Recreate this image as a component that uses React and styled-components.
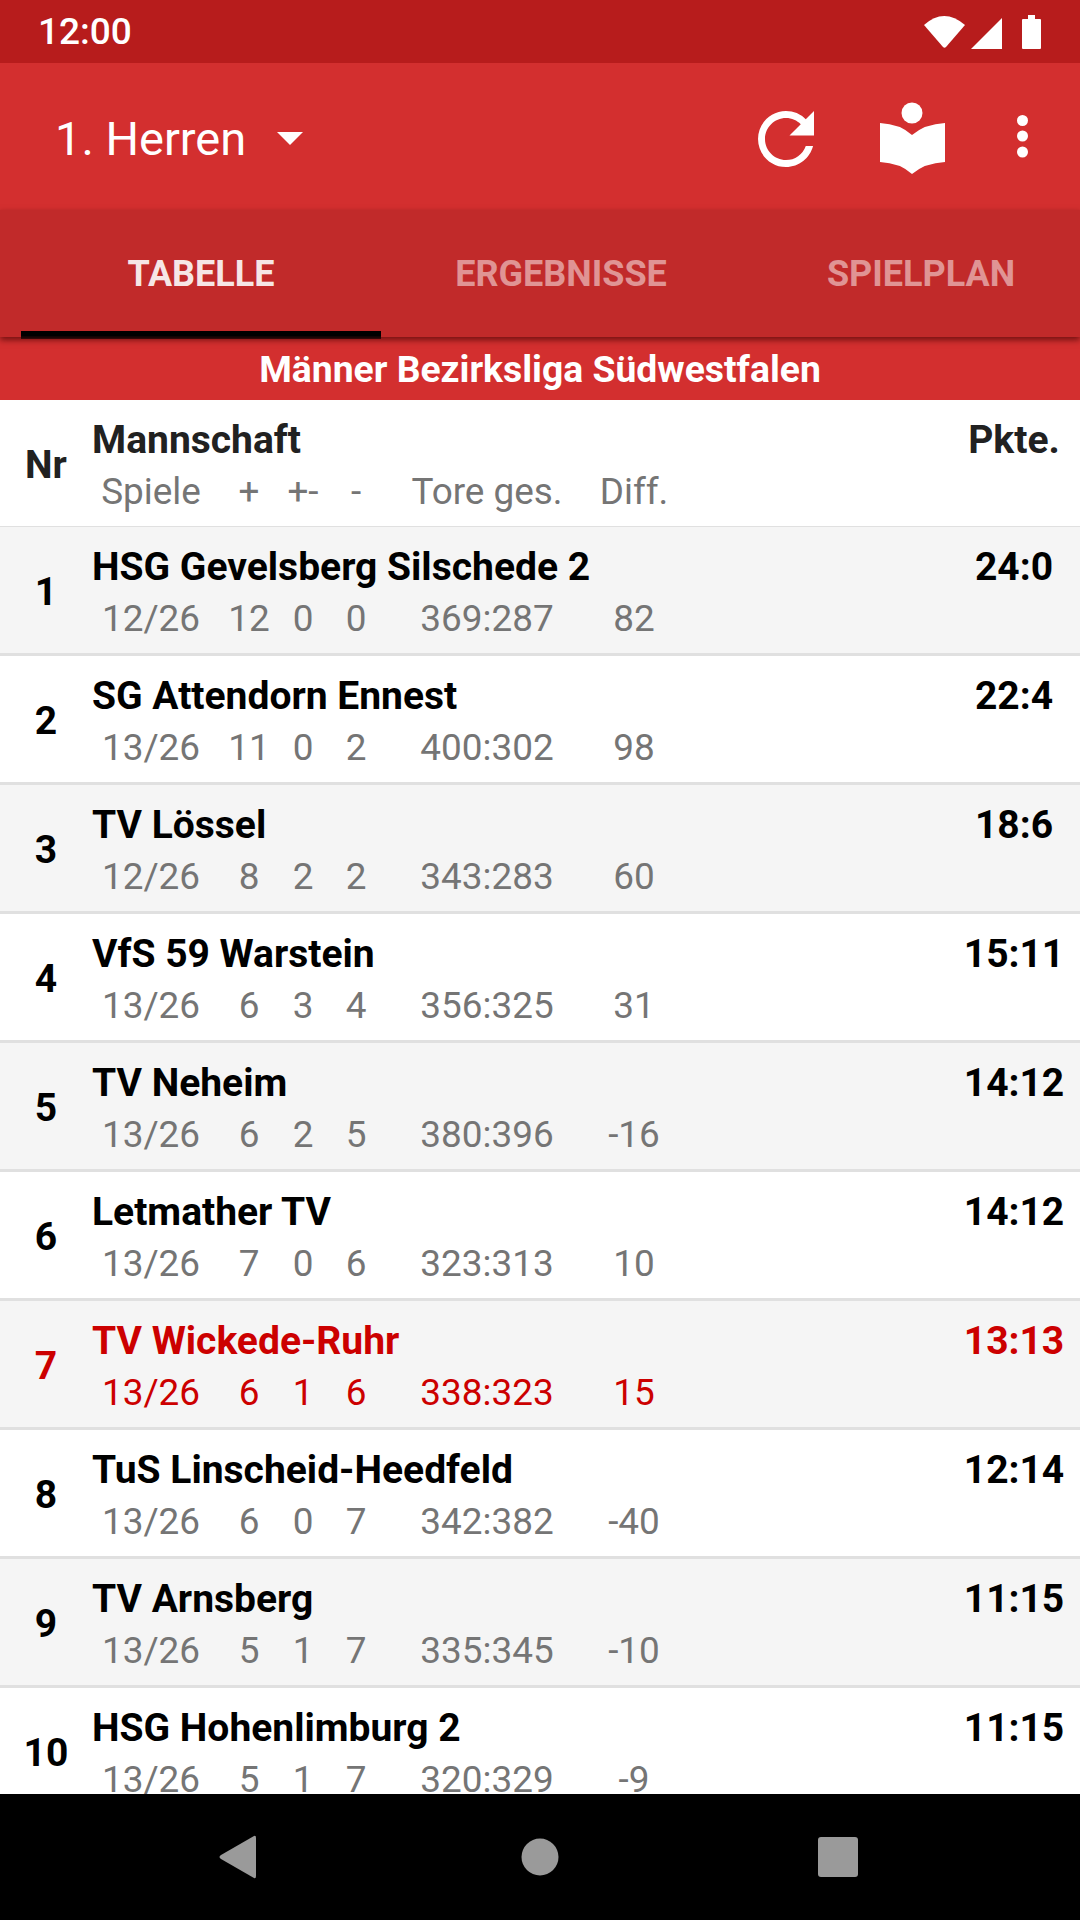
import React from 'react'
import styled, { createGlobalStyle } from 'styled-components'

const GlobalStyle = createGlobalStyle`
  html, body {
    margin: 0;
    padding: 0;
    background: #fff;
    font-family: Roboto, "Noto Sans", sans-serif;
  }
`

const teams = [
  { nr: 1, name: 'HSG Gevelsberg Silschede 2', pts: '24:0', played: '12/26', won: 12, drawn: 0, lost: 0, goals: '369:287', diff: 82 },
  { nr: 2, name: 'SG Attendorn Ennest', pts: '22:4', played: '13/26', won: 11, drawn: 0, lost: 2, goals: '400:302', diff: 98 },
  { nr: 3, name: 'TV Lössel', pts: '18:6', played: '12/26', won: 8, drawn: 2, lost: 2, goals: '343:283', diff: 60 },
  { nr: 4, name: 'VfS 59 Warstein', pts: '15:11', played: '13/26', won: 6, drawn: 3, lost: 4, goals: '356:325', diff: 31 },
  { nr: 5, name: 'TV Neheim', pts: '14:12', played: '13/26', won: 6, drawn: 2, lost: 5, goals: '380:396', diff: -16 },
  { nr: 6, name: 'Letmather TV', pts: '14:12', played: '13/26', won: 7, drawn: 0, lost: 6, goals: '323:313', diff: 10 },
  { nr: 7, name: 'TV Wickede-Ruhr', pts: '13:13', played: '13/26', won: 6, drawn: 1, lost: 6, goals: '338:323', diff: 15, own: true },
  { nr: 8, name: 'TuS Linscheid-Heedfeld', pts: '12:14', played: '13/26', won: 6, drawn: 0, lost: 7, goals: '342:382', diff: -40 },
  { nr: 9, name: 'TV Arnsberg', pts: '11:15', played: '13/26', won: 5, drawn: 1, lost: 7, goals: '335:345', diff: -10 },
  { nr: 10, name: 'HSG Hohenlimburg 2', pts: '11:15', played: '13/26', won: 5, drawn: 1, lost: 7, goals: '320:329', diff: -9 },
]

const Screen = styled.div`
  width: 1080px;
  height: 1920px;
  display: flex;
  flex-direction: column;
  overflow: hidden;
`

const StatusBar = styled.div`
  height: 63px;
  flex: none;
  background: #b71c1c;
  color: #fff;
  display: flex;
  align-items: center;
  justify-content: space-between;
  padding: 0 38px;
  font-size: 37px;
  font-weight: 500;
`

const StatusIcons = styled.svg`
  display: block;
`

const Toolbar = styled.div`
  height: 147px;
  box-sizing: border-box;
  flex: none;
  background: #d32f2f;
  color: #fff;
  display: flex;
  align-items: center;
  padding: 4px 0 0 55px;
`

const Title = styled.div`
  font-size: 47px;
  line-height: 54px;
`

const Caret = styled.div`
  width: 0;
  height: 0;
  margin-left: 31px;
  border-left: 13px solid transparent;
  border-right: 13px solid transparent;
  border-top: 13px solid #fff;
`

const Actions = styled.div`
  margin-left: auto;
  display: flex;
  align-items: center;
  padding-right: 52px;
`

const RefreshIcon = styled.svg`
  margin-right: 52px;
`

const BookIcon = styled.svg`
  margin: -2px 72px 0 0;
`

const TabBar = styled.div`
  height: 127px;
  flex: none;
  background: #c12a2a;
  display: flex;
  padding-left: 21px;
  position: relative;
  z-index: 2;
  box-shadow: 0 3px 6px rgba(90, 10, 10, 0.8);
`

const Tab = styled.div`
  width: 360px;
  flex: none;
  position: relative;
  display: flex;
  align-items: center;
  justify-content: center;
  font-size: 36px;
  font-weight: 700;
  color: ${p => (p.$active ? '#f6e6e6' : 'rgba(255, 255, 255, 0.5)')};

  &::after {
    content: '';
    display: ${p => (p.$active ? 'block' : 'none')};
    position: absolute;
    left: 0;
    right: 0;
    bottom: -2px;
    height: 8px;
    background: linear-gradient(#000 60%, rgba(0, 0, 0, 0.6));
  }
`

const LeagueBar = styled.div`
  height: 63px;
  flex: none;
  background: #d32f2f;
  color: #fff;
  font-size: 37.3px;
  font-weight: 700;
  display: flex;
  align-items: center;
  justify-content: center;
`

const List = styled.div`
  flex: 1;
  min-height: 0;
  overflow: hidden;
  background: #fff;
`

const Row = styled.div`
  height: ${p => (p.$head ? '127px' : '129px')};
  box-sizing: border-box;
  background: ${p => (p.$shaded ? '#f5f5f5' : '#fff')};
  border-bottom: ${p => (p.$head ? '1px' : '3px')} solid #e0e0e0;
  color: ${p => (p.$own ? '#cc0000' : p.$head ? '#212121' : '#000')};
  display: grid;
  grid-template-columns: 92px 1fr 132px;
`

const Nr = styled.div`
  display: flex;
  align-items: center;
  justify-content: center;
  font-size: 39px;
  font-weight: 700;
  height: 129px;
`

const Main = styled.div`
  padding-top: 15px;
  min-width: 0;
`

const Name = styled.div`
  font-size: 39px;
  font-weight: 700;
  line-height: 50px;
  white-space: nowrap;
`

const Stats = styled.div`
  display: grid;
  grid-template-columns: 118px 78px 30px 76px 186px 108px;
  height: 52px;
  align-items: center;
  font-size: 36.9px;
  color: ${p => (p.$own ? '#cc0000' : '#757575')};
`

const Stat = styled.div`
  justify-self: center;
  white-space: nowrap;
`

const Points = styled.div`
  padding-top: 15px;
  font-size: 39px;
  font-weight: 700;
  line-height: 50px;
  text-align: center;
`

const NavBar = styled.div`
  height: 126px;
  flex: none;
  background: #000;
  display: flex;
  align-items: center;
  padding-left: 218px;
`

const NavSlot = styled.div`
  width: ${p => p.$width}px;
  flex: none;
  display: flex;
`

const Cols = ({ vals, own }) => (
  <Stats $own={own}>
    {vals.map((v, i) => (
      <Stat key={i}>{v}</Stat>
    ))}
  </Stats>
)

export default function App() {
  return (
    <>
      <GlobalStyle />
      <Screen>
        <StatusBar>
          <span>12:00</span>
          <StatusIcons width="122" height="40" viewBox="920 11 122 40">
            <path d="M924 24 Q944 6 965 24 L946 46 Q944.5 47.5 943 46 Z" fill="#fff" />
            <path d="M1002 17 V48 H971 Z" fill="#fff" />
            <path d="M1022 19 Q1022 18 1023 18 H1028 V14 H1035 V18 H1040 Q1041 18 1041 19 V47 Q1041 48 1040 48 H1023 Q1022 48 1022 47 Z" fill="#fff" />
          </StatusIcons>
        </StatusBar>
        <Toolbar>
          <Title>1. Herren</Title>
          <Caret />
          <Actions>
            <RefreshIcon width="84" height="84" viewBox="0 0 24 24" fill="#fff">
              <path d="M17.65 6.35A7.958 7.958 0 0 0 12 4c-4.42 0-7.99 3.58-7.99 8s3.57 8 7.99 8c3.73 0 6.84-2.55 7.73-6h-2.08A5.99 5.99 0 0 1 12 18c-3.31 0-6-2.69-6-6s2.69-6 6-6c1.66 0 3.14.69 4.22 1.78L13 11h7V4l-2.35 2.35z" />
            </RefreshIcon>
            <BookIcon width="65" height="72" viewBox="0 0 65 72" fill="#fff">
              <circle cx="32" cy="11" r="10.5" />
              <path d="M0 21 Q20 22 32 33 Q45 22 65 21 V60 Q45 61 32 72 Q20 61 0 60 Z" />
            </BookIcon>
            <svg width="11" height="48" viewBox="0 0 11 48" fill="#fff">
              <circle cx="5.5" cy="5.5" r="5.5" />
              <circle cx="5.5" cy="21" r="5.5" />
              <circle cx="5.5" cy="37" r="5.5" />
            </svg>
          </Actions>
        </Toolbar>
        <TabBar>
          <Tab $active>TABELLE</Tab>
          <Tab>ERGEBNISSE</Tab>
          <Tab>SPIELPLAN</Tab>
        </TabBar>
        <LeagueBar>Männer Bezirksliga Südwestfalen</LeagueBar>
        <List>
          <Row $head>
            <Nr>Nr</Nr>
            <Main>
              <Name>Mannschaft</Name>
              <Cols vals={['Spiele', '+', '+-', '-', 'Tore ges.', 'Diff.']} />
            </Main>
            <Points>Pkte.</Points>
          </Row>
          {teams.map((t, i) => (
            <Row key={t.nr} $shaded={i % 2 === 0} $own={t.own}>
              <Nr>{t.nr}</Nr>
              <Main>
                <Name>{t.name}</Name>
                <Cols own={t.own} vals={[t.played, t.won, t.drawn, t.lost, t.goals, t.diff]} />
              </Main>
              <Points>{t.pts}</Points>
            </Row>
          ))}
        </List>
        <NavBar>
          <NavSlot $width={303}>
            <svg width="38" height="44" viewBox="0 0 38 44" fill="#9a9a9a">
              <path d="M36 1 Q38 0 38 3 V41 Q38 44 36 43 L3 24 Q0 22 3 20 Z" />
            </svg>
          </NavSlot>
          <NavSlot $width={297}>
            <svg width="38" height="38" viewBox="0 0 38 38" fill="#9a9a9a">
              <circle cx="19" cy="19" r="18.5" />
            </svg>
          </NavSlot>
          <NavSlot $width={40}>
            <svg width="40" height="40" viewBox="0 0 40 40" fill="#9a9a9a">
              <rect x="0" y="0" width="40" height="40" rx="3" />
            </svg>
          </NavSlot>
        </NavBar>
      </Screen>
    </>
  )
}
